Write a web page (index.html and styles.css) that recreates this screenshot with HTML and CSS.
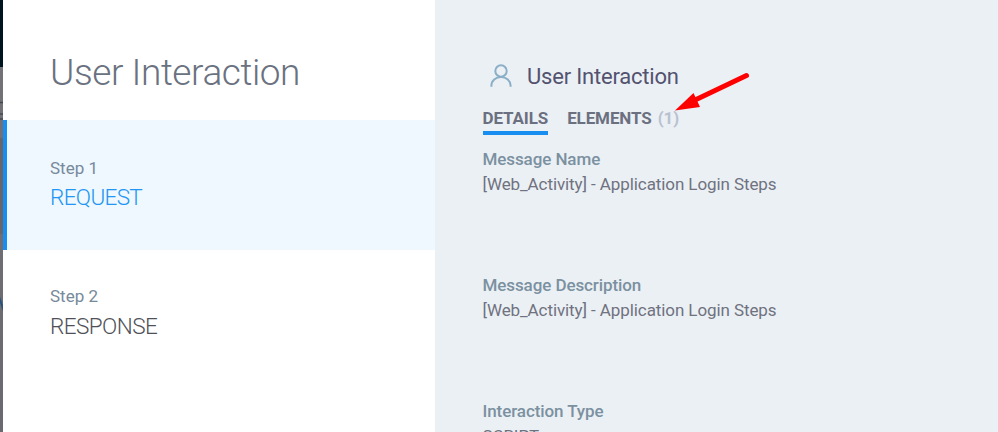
FILE: index.html
```html
<!DOCTYPE html>
<html lang="en">
<head>
<meta charset="utf-8">
<title>User Interaction</title>
<link rel="stylesheet" href="styles.css">
</head>
<body>
<div class="app">
  <div class="backdrop">
    <svg width="3" height="432" viewBox="0 0 3 432">
      <path d="M0 102.5h3M0 114h3M0 119h3" stroke="#414950" stroke-width="1.5"/>
      <path d="M0 138h3v96H0z" fill="#676767"/>
      <path d="M-1 297L4 311" stroke="#2b527c" stroke-width="2"/>
    </svg>
  </div>
  <aside class="steps">
    <h1 class="title">User Interaction</h1>
    <div class="step active">
      <div class="step-number">Step 1</div>
      <div class="step-name">REQUEST</div>
    </div>
    <div class="step">
      <div class="step-number">Step 2</div>
      <div class="step-name">RESPONSE</div>
    </div>
  </aside>
  <main class="panel">
    <header class="heading">
      <svg class="user" width="22" height="24" viewBox="0 0 22 24" fill="none" stroke="#8aafc7" stroke-width="2">
        <circle cx="11" cy="7" r="5.7"/>
        <path d="M1.4 22.8v-1.2a9.6 8.6 0 0 1 19.2 0v1.2"/>
      </svg>
      <h2>User Interaction</h2>
    </header>
    <nav class="tabs">
      <div class="tab selected">DETAILS</div>
      <div class="tab">ELEMENTS <span class="count">(1)</span></div>
    </nav>
    <dl class="fields">
      <div class="field"><dt>Message Name</dt><dd>[Web_Activity] - Application Login Steps</dd></div>
      <div class="field"><dt>Message Description</dt><dd>[Web_Activity] - Application Login Steps</dd></div>
      <div class="field"><dt>Interaction Type</dt><dd>SCRIPT</dd></div>
    </dl>
    <svg class="arrow" width="80" height="44" viewBox="0 0 80 44">
      <path d="M73.5 5.5L20 31" stroke="#f00" stroke-width="5" stroke-linecap="round"/>
      <path d="M2 40.5L20.5 23 27 37Z" fill="#f00"/>
    </svg>
  </main>
</div>
</body>
</html>
```

FILE: styles.css
```css
* { box-sizing: border-box; }
body { margin: 0; font-family: Roboto, sans-serif; overflow: hidden; }
h1, h2, dl, dd { margin: 0; }
.app { display: flex; width: 998px; height: 432px; overflow: hidden; }
.backdrop { width: 3px; height: 432px; background: linear-gradient(#00141f 67px, #727277 67px, #69696f); }
.backdrop svg { display: block; }
.steps { width: 432px; background: #fff; }
.title { height: 120px; padding: 49px 0 0 47px; font-size: 37px; line-height: 48px; font-weight: 300; letter-spacing: -0.43px; color: #6a7180; white-space: nowrap; }
.step { height: 130px; padding: 35px 0 0 43px; border-left: 4px solid transparent; }
.step.active { background: #eff7ff; border-color: #188ff0; padding-top: 37px; }
.step-number { font-size: 17px; line-height: 22px; color: #778a9b; }
.step-name { margin-top: 5px; font-size: 22.5px; line-height: 28px; font-weight: 300; letter-spacing: -0.55px; color: #505158; }
.active .step-name { color: #2196f3; margin-top: 4px; letter-spacing: -0.65px; }
.panel { position: relative; width: 563px; padding: 62px 0 0 47.5px; background: #ebf0f5; }
.heading { display: flex; height: 28px; gap: 15px; padding-left: 7.5px; }
.user { margin-top: 2px; }
.heading h2 { padding-top: 1px; font-size: 22px; line-height: 28px; font-weight: 400; letter-spacing: -0.2px; color: #53536f; }
.tabs { display: flex; gap: 19px; margin-top: 16px; height: 29px; }
.tab { font-size: 17px; line-height: 24px; font-weight: 700; letter-spacing: -0.12px; color: #6b7080; white-space: nowrap; }
.selected { border-bottom: 4px solid #188ff0; }
.count { margin-left: 2px; color: #b9c1d0; }
.fields { margin-top: 12px; }
.field { height: 126px; font-size: 17px; line-height: 25px; letter-spacing: -0.09px; color: #70727f; }
.field dt { font-weight: 500; line-height: 25px; color: #7b90a0; }
.arrow { position: absolute; left: 238px; top: 70px; }
```
